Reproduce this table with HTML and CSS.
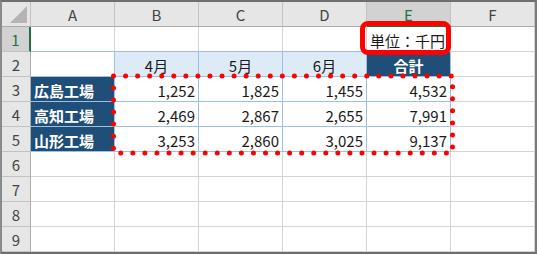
FILE: index.html
```html
<!DOCTYPE html>
<html lang="ja">
<head>
<meta charset="utf-8">
<title>Sheet</title>
<link rel="stylesheet" href="styles.css">
</head>
<body>
<div class="sheet">
  <div class="grid">
    <div class="ch corner"><span class="tri"></span></div>
    <div class="ch">A</div>
    <div class="ch">B</div>
    <div class="ch">C</div>
    <div class="ch">D</div>
    <div class="ch sel">E</div>
    <div class="ch">F</div>

    <div class="rh sel">1</div>
    <div class="c bb"></div>
    <div class="c bb"></div>
    <div class="c bb"></div>
    <div class="c bb"></div>
    <div class="c unit bb">単位：千円</div>
    <div class="c"></div>

    <div class="rh">2</div>
    <div class="c tb"></div>
    <div class="c tb mon">4月</div>
    <div class="c tb mon">5月</div>
    <div class="c tb mon">6月</div>
    <div class="c tb dark tot">合計</div>
    <div class="c"></div>

    <div class="rh">3</div>
    <div class="c tb dark name">広島工場</div>
    <div class="c tb num">1,252</div>
    <div class="c tb num">1,825</div>
    <div class="c tb num">1,455</div>
    <div class="c tb num">4,532</div>
    <div class="c"></div>

    <div class="rh">4</div>
    <div class="c tb dark name">高知工場</div>
    <div class="c tb num">2,469</div>
    <div class="c tb num">2,867</div>
    <div class="c tb num">2,655</div>
    <div class="c tb num">7,991</div>
    <div class="c"></div>

    <div class="rh">5</div>
    <div class="c tb dark name">山形工場</div>
    <div class="c tb num">3,253</div>
    <div class="c tb num">2,860</div>
    <div class="c tb num">3,025</div>
    <div class="c tb num">9,137</div>
    <div class="c"></div>

    <div class="rh">6</div>
    <div class="c"></div><div class="c"></div><div class="c"></div><div class="c"></div><div class="c"></div><div class="c"></div>
    <div class="rh">7</div>
    <div class="c"></div><div class="c"></div><div class="c"></div><div class="c"></div><div class="c"></div><div class="c"></div>
    <div class="rh">8</div>
    <div class="c"></div><div class="c"></div><div class="c"></div><div class="c"></div><div class="c"></div><div class="c"></div>
    <div class="rh">9</div>
    <div class="c"></div><div class="c"></div><div class="c"></div><div class="c"></div><div class="c"></div><div class="c"></div>
  </div>

  <div class="redbox"></div>
  <svg class="dots" width="535" height="252" viewBox="0 0 535 252" xmlns="http://www.w3.org/2000/svg">
    <rect x="111.5" y="74" width="339" height="77" fill="none" stroke="#ff0000" stroke-width="5" stroke-linecap="round" stroke-dasharray="0 12.06"/>
  </svg>
</div>
</body>
</html>
```

FILE: styles.css
```css
* { box-sizing: border-box; }
html, body {
  margin: 0;
  padding: 0;
  background: #ffffff;
}
body {
  font-family: "Noto Sans CJK JP", "Noto Sans", sans-serif;
  font-size: 15px;
  color: #1a1a1a;
}
.sheet {
  position: relative;
  width: 537px;
  height: 254px;
  border-top: 2px solid #6e6e6e;
  border-left: 2px solid #8a8a8a;
  border-right: 2px solid #7a7a7a;
  border-bottom: 2px solid #6e6e6e;
  overflow: hidden;
}
.grid {
  display: grid;
  grid-template-columns: 29px repeat(6, 84px);
  grid-template-rows: repeat(10, 25px);
}
.grid > div {
  border-right: 1px solid #d4d4d4;
  border-bottom: 1px solid #d4d4d4;
  display: flex;
  align-items: center;
  line-height: 1;
  white-space: nowrap;
  overflow: hidden;
}
.ch {
  background: #e6e6e6;
  justify-content: center;
  color: #444;
  padding-top: 1px;
}
.grid > .ch {
  border-right-color: #c2c2c2;
  border-bottom-color: #ababab;
}
.rh {
  background: #e6e6e6;
  justify-content: center;
  color: #444;
  padding-top: 1px;
}
.grid > .rh {
  border-right-color: #ababab;
  border-bottom-color: #c2c2c2;
}
.grid > .ch.sel {
  background: #d2d2d2;
  color: #217346;
  border-bottom: 2px solid #217346;
}
.grid > .rh.sel {
  background: #d2d2d2;
  color: #217346;
  border-right: 2px solid #217346;
}
.corner {
  position: relative;
}
.tri {
  position: absolute;
  right: 3px;
  bottom: 3px;
  width: 0;
  height: 0;
  border-left: 17px solid transparent;
  border-bottom: 17px solid #b4b4b4;
}
.grid > .bb {
  border-bottom-color: #9bc2e6;
}
.grid > .tb {
  border-right-color: #9bc2e6;
  border-bottom-color: #9bc2e6;
}
.mon {
  background: #ddebf7;
  justify-content: center;
  padding-top: 2px;
}
.grid > .dark {
  background: #1f4e78;
  color: #ffffff;
  font-weight: 700;
}
.tot {
  justify-content: center;
  padding-top: 2px;
}
.name {
  padding-left: 3px;
  padding-top: 2px;
  font-size: 15px;
}
.num {
  justify-content: flex-end;
  padding-right: 3px;
  padding-top: 2px;
}
.unit {
  justify-content: flex-end;
  padding-right: 5px;
  padding-top: 2px;
}
.redbox {
  position: absolute;
  left: 358px;
  top: 19px;
  width: 91px;
  height: 34px;
  border: 5px solid #ff0000;
  border-radius: 8px;
}
.dots {
  position: absolute;
  left: 0;
  top: 0;
}
```
